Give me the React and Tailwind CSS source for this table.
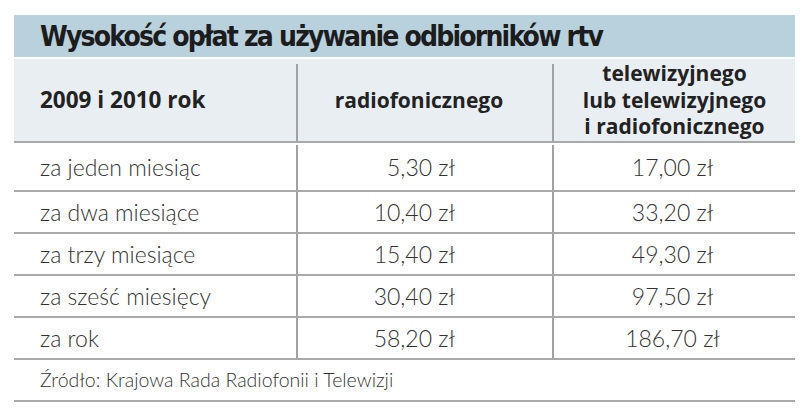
import React from 'react';

const rows = [
  { label: 'za jeden miesiąc', radio: '5,30 zł', tv: '17,00 zł', first: true },
  { label: 'za dwa miesiące', radio: '10,40 zł', tv: '33,20 zł' },
  { label: 'za trzy miesiące', radio: '15,40 zł', tv: '49,30 zł' },
  { label: 'za sześć miesięcy', radio: '30,40 zł', tv: '97,50 zł' },
  { label: 'za rok', radio: '58,20 zł', tv: '186,70 zł' },
];

const Row = ({ label, radio, tv, first }) => (
  <div className={`flex border-b-2 border-[#a9a9a9] ${first ? 'h-[49px] pt-[2px]' : 'h-[42px]'}`}>
    <div className="w-[282px] pl-[26px] flex items-center">{label}</div>
    <div className="w-[256px] border-l-2 border-[#a2a2a2] flex items-center justify-end pr-[97px]">{radio}</div>
    <div className="flex-1 border-l-2 border-[#a2a2a2] flex items-center justify-center pr-[4px]">{tv}</div>
  </div>
);

const App = () => {
  return (
    <div className="w-[805px] h-[414px] bg-white pt-[15px] pl-[14px] overflow-hidden">
      <div className="w-[781px]" style={{ fontFamily: 'Lato, "Open Sans", sans-serif' }}>
        {/* Title */}
        <div className="h-[42px] bg-[#b9d0dd] flex items-center pl-[26px]">
          <h1
            className="text-[28px] font-bold text-[#1c1c1c] tracking-[-1.8px] pt-[1px]"
            style={{ fontFamily: '"Liberation Sans Narrow", "DejaVu Sans Condensed", sans-serif' }}
          >
            Wysokość opłat za używanie odbiorników rtv
          </h1>
        </div>

        {/* Header */}
        <div
          className="mt-[2px] h-[84px] bg-[#e9eef2] border-b-2 border-[#a9a9a9] flex text-[21px] font-bold text-[#222] leading-[26.5px]"
          style={{ fontFamily: '"Open Sans", Lato, sans-serif' }}
        >
          <div className="w-[282px] pl-[26px] flex items-center text-[22.5px]">2009 i 2010 rok</div>
          <div className="w-[256px] mt-[5px] border-l-2 border-[#a2a2a2] flex items-center justify-center pr-[12px] pb-[5px]">
            radiofonicznego
          </div>
          <div className="flex-1 mt-[5px] border-l-2 border-[#a2a2a2] flex items-center justify-center text-center pb-[5px]">
            telewizyjnego
            <br />
            lub telewizyjnego
            <br />
            i radiofonicznego
          </div>
        </div>

        {/* Body */}
        <div className="text-[23px] text-[#333] font-light">
          {rows.map((r) => (
            <Row key={r.label} {...r} />
          ))}
          <div className="h-[42px] border-b-2 border-[#a9a9a9] flex items-center pl-[26px] text-[19.5px]">
            Źródło: Krajowa Rada Radiofonii i Telewizji
          </div>
        </div>
      </div>
    </div>
  );
};

export default App;
